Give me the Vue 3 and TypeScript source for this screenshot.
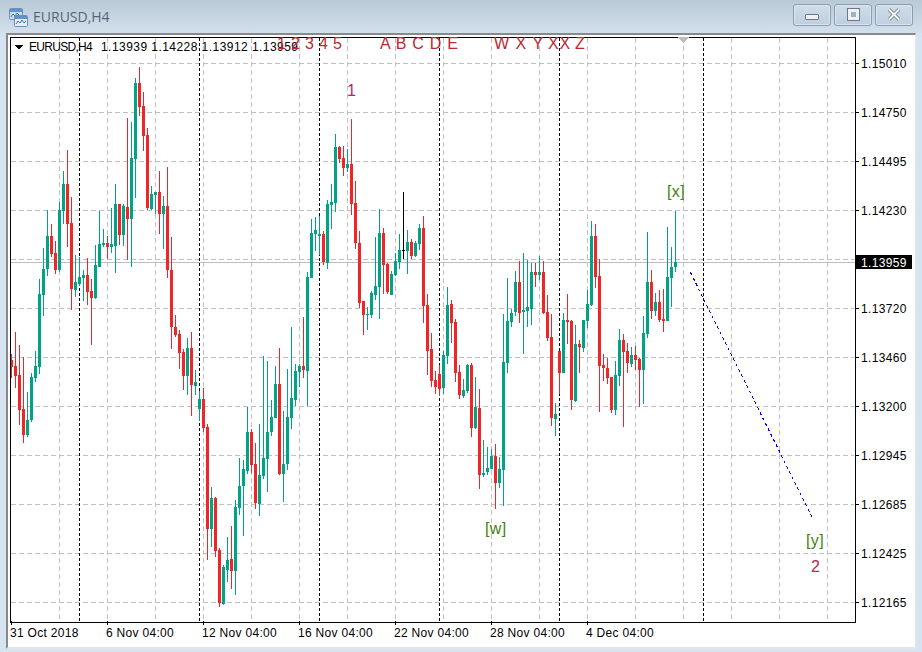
<script setup lang="ts">
// [hi, bodyTop, bodyBottom, lo, kind], one bar every 4px starting at x=11
type Bar = [number, number, number, number, 'g' | 'r' | 'k']

const bars: Bar[] = [
  [354, 360, 367, 378, 'r'], [332, 366, 376, 388, 'r'], [345, 375, 410, 425, 'r'], [357, 409, 435, 443, 'r'],
  [392, 420, 435, 437, 'g'], [373, 377, 420, 422, 'g'], [351, 366, 378, 382, 'g'], [279, 294, 367, 374, 'g'],
  [248, 269, 295, 316, 'g'], [210, 236, 269, 276, 'g'], [224, 236, 254, 257, 'r'], [241, 253, 270, 274, 'r'],
  [202, 210, 270, 272, 'g'], [171, 184, 211, 224, 'g'], [150, 184, 224, 247, 'r'], [197, 223, 289, 310, 'r'],
  [255, 282, 290, 297, 'g'], [257, 277, 284, 286, 'g'], [270, 275, 278, 301, 'g'], [258, 275, 292, 305, 'r'],
  [279, 291, 298, 345, 'r'], [245, 265, 298, 299, 'g'], [211, 244, 267, 267, 'g'], [229, 243, 245, 247, 'g'],
  [236, 243, 247, 259, 'r'], [208, 244, 247, 253, 'g'], [184, 204, 246, 273, 'g'], [204, 204, 235, 245, 'r'],
  [204, 206, 235, 246, 'g'], [118, 207, 219, 260, 'r'], [122, 158, 219, 267, 'g'], [78, 83, 159, 198, 'g'],
  [67, 83, 107, 116, 'r'], [92, 106, 136, 151, 'r'], [128, 135, 208, 210, 'r'], [186, 194, 209, 210, 'g'],
  [192, 192, 195, 214, 'g'], [171, 192, 214, 234, 'r'], [196, 206, 214, 249, 'g'], [167, 206, 270, 278, 'r'],
  [237, 270, 327, 349, 'r'], [315, 327, 335, 337, 'r'], [330, 334, 353, 369, 'r'], [349, 352, 376, 390, 'r'],
  [338, 348, 376, 395, 'g'], [332, 348, 385, 416, 'r'], [370, 382, 386, 395, 'g'], [391, 399, 409, 421, 'g'],
  [388, 399, 428, 432, 'r'], [424, 427, 529, 560, 'r'], [487, 498, 529, 547, 'g'], [497, 498, 551, 557, 'r'],
  [548, 550, 603, 607, 'r'], [565, 567, 604, 605, 'g'], [537, 560, 570, 582, 'g'], [526, 559, 571, 589, 'r'],
  [500, 507, 571, 595, 'g'], [458, 486, 508, 515, 'g'], [460, 469, 486, 536, 'g'], [407, 432, 471, 474, 'g'],
  [429, 432, 465, 473, 'r'], [443, 464, 503, 509, 'r'], [424, 475, 504, 516, 'g'], [356, 458, 476, 479, 'g'],
  [361, 432, 459, 492, 'g'], [400, 417, 432, 436, 'g'], [366, 384, 418, 418, 'g'], [348, 384, 474, 475, 'r'],
  [411, 464, 474, 502, 'g'], [369, 417, 464, 470, 'g'], [327, 398, 418, 429, 'g'], [364, 371, 400, 406, 'g'],
  [364, 366, 372, 387, 'g'], [317, 366, 370, 378, 'r'], [272, 277, 371, 406, 'g'], [219, 233, 278, 278, 'g'],
  [217, 230, 234, 251, 'g'], [216, 234, 236, 255, 'g'], [231, 234, 262, 265, 'r'], [200, 204, 263, 269, 'g'],
  [184, 202, 205, 229, 'g'], [134, 147, 203, 212, 'g'], [146, 147, 159, 163, 'r'], [146, 158, 168, 176, 'r'],
  [149, 164, 168, 172, 'g'], [119, 164, 204, 215, 'r'], [181, 203, 243, 249, 'r'], [231, 243, 303, 308, 'r'],
  [301, 301, 315, 335, 'r'], [307, 314, 315, 330, 'g'], [291, 293, 315, 318, 'g'], [237, 286, 295, 300, 'g'],
  [209, 233, 287, 319, 'g'], [228, 233, 265, 294, 'r'], [263, 264, 292, 294, 'r'], [271, 274, 295, 295, 'g'],
  [253, 261, 275, 276, 'g'], [234, 250, 262, 269, 'g'], [192, 250, 251, 259, 'k'], [230, 242, 251, 274, 'g'],
  [239, 242, 256, 259, 'r'], [241, 243, 256, 257, 'g'], [224, 228, 244, 250, 'g'], [216, 228, 306, 323, 'r'],
  [294, 305, 351, 375, 'r'], [333, 349, 381, 387, 'r'], [371, 380, 387, 394, 'r'], [365, 374, 389, 396, 'r'],
  [351, 355, 388, 394, 'g'], [287, 305, 356, 364, 'g'], [300, 304, 323, 343, 'r'], [319, 322, 373, 382, 'r'],
  [365, 372, 395, 399, 'r'], [379, 390, 396, 398, 'g'], [364, 365, 391, 393, 'g'], [363, 365, 428, 437, 'r'],
  [377, 407, 428, 429, 'g'], [389, 408, 475, 489, 'r'], [440, 473, 475, 477, 'g'], [447, 468, 472, 475, 'g'],
  [449, 456, 469, 469, 'g'], [444, 456, 483, 509, 'r'], [457, 469, 483, 488, 'g'], [314, 362, 470, 506, 'g'],
  [278, 321, 363, 373, 'g'], [309, 313, 322, 327, 'g'], [271, 282, 312, 316, 'g'], [261, 282, 313, 323, 'r'],
  [253, 310, 312, 354, 'g'], [260, 307, 311, 327, 'g'], [263, 272, 309, 325, 'g'], [263, 272, 275, 287, 'r'],
  [256, 272, 275, 280, 'g'], [261, 272, 313, 314, 'r'], [295, 312, 338, 341, 'r'], [314, 337, 418, 426, 'r'],
  [403, 414, 419, 436, 'g'], [351, 351, 373, 394, 'r'], [313, 320, 373, 373, 'g'], [294, 320, 322, 344, 'r'],
  [320, 321, 400, 410, 'r'], [325, 344, 401, 402, 'g'], [340, 344, 347, 373, 'r'], [320, 320, 348, 352, 'g'],
  [290, 304, 321, 328, 'g'], [221, 236, 305, 306, 'g'], [224, 236, 277, 288, 'r'], [259, 276, 366, 412, 'r'],
  [354, 365, 368, 381, 'r'], [358, 368, 378, 384, 'r'], [377, 377, 410, 413, 'r'], [361, 375, 410, 415, 'g'],
  [329, 340, 376, 386, 'g'], [334, 340, 352, 427, 'r'], [343, 351, 363, 373, 'r'], [347, 355, 364, 367, 'g'],
  [346, 355, 360, 370, 'r'], [358, 359, 370, 407, 'r'], [316, 333, 370, 404, 'g'], [232, 282, 334, 338, 'g'],
  [270, 282, 311, 319, 'r'], [293, 302, 311, 316, 'g'], [290, 302, 320, 322, 'r'], [289, 319, 321, 332, 'r'],
  [227, 277, 321, 321, 'g'], [247, 267, 278, 307, 'g'], [211, 262, 267, 272, 'g'],
]

const barColor = { g: '#00a383', r: '#f02528', k: '#000000' }

const candles = bars.map(([hi, top, bottom, lo, kind], i) => ({
  x: 11 + i * 4,
  hi,
  lo,
  top,
  height: Math.max(bottom - top, 1),
  color: barColor[kind],
}))

const prices = ['1.15010', '1.14750', '1.14495', '1.14230', '1.13970', '1.13720', '1.13460', '1.13200', '1.12945', '1.12685', '1.12425', '1.12165']
const priceRows = prices.filter((p) => p !== '1.13970').map((label) => ({
  label,
  y: 63 + prices.indexOf(label) * 49,
}))
const gridRows = prices.map((_, i) => 63 + i * 49)
const gridCols = Array.from({ length: 17 }, (_, i) => 59 + i * 48)
const separators = [79, 199, 319, 439, 559, 703]

const dates = ['31 Oct 2018', '6 Nov 04:00', '12 Nov 04:00', '16 Nov 04:00', '22 Nov 04:00', '28 Nov 04:00', '4 Dec 04:00']
const timeTicks = [11, 107, 203, 299, 395, 491, 587]

const waveLabels = [
  { text: '1 2 3 4 5', x: 277, y: 49, color: '#bb2a30', kind: 'tight' },
  { text: 'A B C D E', x: 380, y: 49, color: '#bb2a30', kind: 'mid' },
  { text: 'W X Y', x: 494, y: 49, color: '#bb2a30', kind: 'wide' },
  { text: 'X', x: 548, y: 49, color: '#bb2a30', kind: 'mid' },
  { text: 'X', x: 559.5, y: 49, color: '#bb2a30', kind: 'mid' },
  { text: 'Z', x: 575, y: 49, color: '#bb2a30', kind: 'mid' },
  { text: '1', x: 347, y: 96, color: '#b5246f', kind: 'mid' },
  { text: '2', x: 811, y: 572, color: '#b8264a', kind: 'mid' },
]
const bracketLabels = [
  { text: '[x]', x: 667, y: 197 },
  { text: '[w]', x: 485, y: 534 },
  { text: '[y]', x: 806, y: 546 },
]
</script>

<template>
  <div class="window">
    <header class="titlebar">
      <svg class="app-icon" width="19" height="19" viewBox="0 0 19 19">
        <rect x="0.5" y="0.5" width="13" height="11" rx="1" fill="#c6dcf2" stroke="#6f8fb5" />
        <rect x="1" y="1" width="12" height="3" fill="#5f93d0" />
        <path d="M2 9l2-3 2 2 2-3 3 3" fill="none" stroke="#3f78b8" />
        <rect x="5.5" y="7.5" width="13" height="11" rx="1" fill="#e3eefa" stroke="#6f8fb5" />
        <rect x="6" y="8" width="12" height="3" fill="#5f93d0" />
        <path d="M7 16l2-3 2 2 2-3 2 3 2-2" fill="none" stroke="#3f78b8" />
      </svg>
      <span class="title">EURUSD,H4</span>
      <div class="controls">
        <button class="ctl"><span class="min"></span></button>
        <button class="ctl"><span class="max"></span></button>
        <button class="ctl">
          <svg width="14" height="13" viewBox="0 0 14 13">
            <path d="M2 1.5l10 10M12 1.5l-10 10" stroke="#6d7884" stroke-width="3.6" />
            <path d="M2 1.5l10 10M12 1.5l-10 10" stroke="#f4f6f8" stroke-width="2" />
          </svg>
        </button>
      </div>
    </header>

    <main class="client">
      <svg class="chart" width="906" height="610" viewBox="8 35 906 610">
        <g shape-rendering="crispEdges">
          <line v-for="y in gridRows" :key="'r' + y" x1="11" x2="854" :y1="y + 0.5" :y2="y + 0.5" class="grid" />
          <line v-for="x in gridCols" :key="'c' + x" :x1="x + 0.5" :x2="x + 0.5" y1="38" y2="621" class="grid" />
          <line v-for="x in separators" :key="'s' + x" :x1="x + 0.5" :x2="x + 0.5" y1="38" y2="621" class="sep" />
          <rect x="11" y="262" width="844" height="1" fill="#bdbdbd" />

          <g v-for="c in candles" :key="c.x">
            <rect :x="c.x" :y="c.hi" width="1" :height="c.lo - c.hi" :fill="c.color" />
            <rect :x="c.x - 1" :y="c.top" width="3" :height="c.height" :fill="c.color" />
          </g>

          <line x1="690.5" y1="272.5" x2="812" y2="517" class="trend" />

          <rect x="10" y="37" width="845" height="585" class="frame" />
          <rect v-for="r in priceRows" :key="r.y" x="855" :y="r.y" width="4" height="1" fill="#000" />
          <rect v-for="x in timeTicks" :key="x" :x="x" y="621" width="1" height="4" fill="#000" />
          <path d="M678 37h11l-5.500 6z" fill="#bdbdbd" />
          <path d="M15 45h8l-4 4.500z" fill="#000" />
          <rect x="856" y="255" width="56" height="14" fill="#000" />
        </g>

        <text x="29" y="51" class="axis head">EURUSD,H4</text>
        <text x="101" y="51" class="axis quote">1.13939 1.14228 1.13912 1.13959</text>

        <text v-for="r in priceRows" :key="r.label" x="861" :y="r.y + 5" class="axis">{{ r.label }}</text>
        <text x="861" y="267" class="axis current">1.13959</text>
        <text v-for="(d, i) in dates" :key="d" :x="10 + i * 96" y="637" class="axis date">{{ d }}</text>

        <text v-for="w in waveLabels" :key="w.text + w.x" :x="w.x" :y="w.y" :fill="w.color" class="wave" :class="w.kind">{{ w.text }}</text>
        <text v-for="b in bracketLabels" :key="b.text" :x="b.x" :y="b.y" class="bracket">{{ b.text }}</text>
      </svg>
    </main>
  </div>
</template>

<style scoped>
.window { width: 922px; height: 652px; display: flex; flex-direction: column; background: #d6e4f1; overflow: hidden; }
.titlebar { height: 33px; flex: none; display: flex; align-items: center; background: linear-gradient(#bac9d6, #d2e0ee); padding: 0 9px; box-sizing: border-box; }
.app-icon { margin-top: 2px; }
.title { margin-left: 5px; font: 14px "Open Sans", "Noto Sans", sans-serif; color: #566575; }
.controls { margin-left: auto; display: flex; gap: 3px; margin-top: -4px; }
.ctl { width: 38px; height: 22px; padding: 0; border: 1px solid #8c9db2; border-radius: 3px; background: linear-gradient(#cfdce9, #bfcfe0); display: flex; align-items: center; justify-content: center; box-shadow: inset 0 0 0 1px #d9e4ef; }
.min { width: 12px; height: 4px; margin-top: 5px; background: #eef2f6; border: 1px solid #6d7884; border-radius: 1px; }
.max { width: 11px; height: 11px; box-sizing: border-box; border: 3px solid #eef2f6; outline: 1px solid #6d7884; background: #9fb0c4; }
.client { flex: none; width: 907px; height: 612px; margin-left: 6px; box-sizing: content-box; background: #fff; border-top: 2px solid #8a8a8a; border-left: 2px solid #8a8a8a; border-right: 1px solid #e6e6e6; border-bottom: 2px solid #e6e6e6; }
.chart { display: block; }
.grid { stroke: #c0c0c0; stroke-width: 1; stroke-dasharray: 5 3; }
.sep { stroke: #000; stroke-width: 1; stroke-dasharray: 3 2; }
.trend { stroke: #0000ff; stroke-width: 1; stroke-dasharray: 3 3; }
.frame { fill: none; stroke: #000; stroke-width: 1; }
.axis { font: 12px "Liberation Sans", Arial, sans-serif; letter-spacing: 0.35px; fill: #000; }
.head { letter-spacing: -0.7px; }
.quote { letter-spacing: 0.45px; }
.date { letter-spacing: 0.3px; }
.current { fill: #fff; }
.wave { font: 16px "Liberation Sans", Arial, sans-serif; }
.tight { letter-spacing: 0.33px; }
.mid { letter-spacing: 0.75px; }
.wide { letter-spacing: 1px; }
.bracket { font: 16px "Liberation Sans", Arial, sans-serif; letter-spacing: 0.4px; fill: #3f8210; }
</style>
